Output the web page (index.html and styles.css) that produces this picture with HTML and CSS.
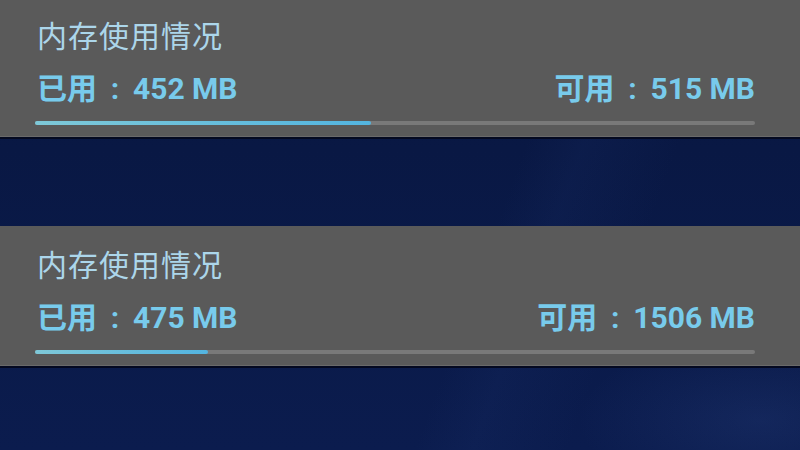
FILE: index.html
```html
<!DOCTYPE html>
<html lang="zh-CN">
<head>
    <meta charset="UTF-8">
    <meta name="viewport" content="width=device-width, initial-scale=1.0">
    <title>内存使用情况</title>
    <link rel="stylesheet" href="styles.css">
</head>
<body>
    <div class="screen">
        <div class="panel first">
            <div class="title">内存使用情况</div>
            <div class="row">
                <span class="value">已用<span class="sep">:</span>452 MB</span>
                <span class="value">可用<span class="sep">:</span>515 MB</span>
            </div>
            <div class="bar"><div class="fill" style="width: 46.7%"></div></div>
        </div>

        <div class="panel">
            <div class="title">内存使用情况</div>
            <div class="row">
                <span class="value">已用<span class="sep">:</span>475 MB</span>
                <span class="value">可用<span class="sep">:</span>1506 MB</span>
            </div>
            <div class="bar"><div class="fill" style="width: 24%"></div></div>
        </div>
    </div>
</body>
</html>
```

FILE: styles.css
```css
body {
    margin: 0;
    width: 800px;
    height: 450px;
    overflow: hidden;
    font-family: Roboto, "Noto Sans CJK SC", sans-serif;
    background-color: #0a1947;
    background-image:
        radial-gradient(ellipse 260px 120px at 760px 420px, rgba(60, 90, 160, 0.18), transparent 70%),
        linear-gradient(110deg, transparent 60%, rgba(35, 60, 125, 0.12) 66%, transparent 76%),
        linear-gradient(180deg, #08163f 0%, #0b1c4e 100%);
}

.screen {
    display: flex;
    flex-direction: column;
    gap: 89px;
}

.panel {
    height: 140px;
    box-sizing: border-box;
    padding: 20px 45px 0 35px;
    background: #5a5a5a;
    border-bottom: 1px solid #6a6a6a;
    box-shadow: 0 2px 0 #040920;
}

.panel.first {
    margin-top: -3px;
}

.title {
    height: 40px;
    line-height: 40px;
    padding-left: 2px;
    font-size: 30px;
    color: #acd6ea;
    letter-spacing: 1px;
}

.row {
    display: flex;
    justify-content: space-between;
    margin-top: 12px;
    height: 40px;
    line-height: 40px;
}

.value {
    padding-left: 2px;
    font-size: 30px;
    font-weight: bold;
    color: #78cbec;
}

.sep {
    display: inline-block;
    width: 36px;
    text-align: center;
}

.bar {
    margin-top: 12px;
    height: 4px;
    background: #797979;
    border-radius: 2px;
}

.fill {
    height: 100%;
    border-radius: 2px;
    background: linear-gradient(90deg, #7ec8d8, #53b4e0);
}
```
